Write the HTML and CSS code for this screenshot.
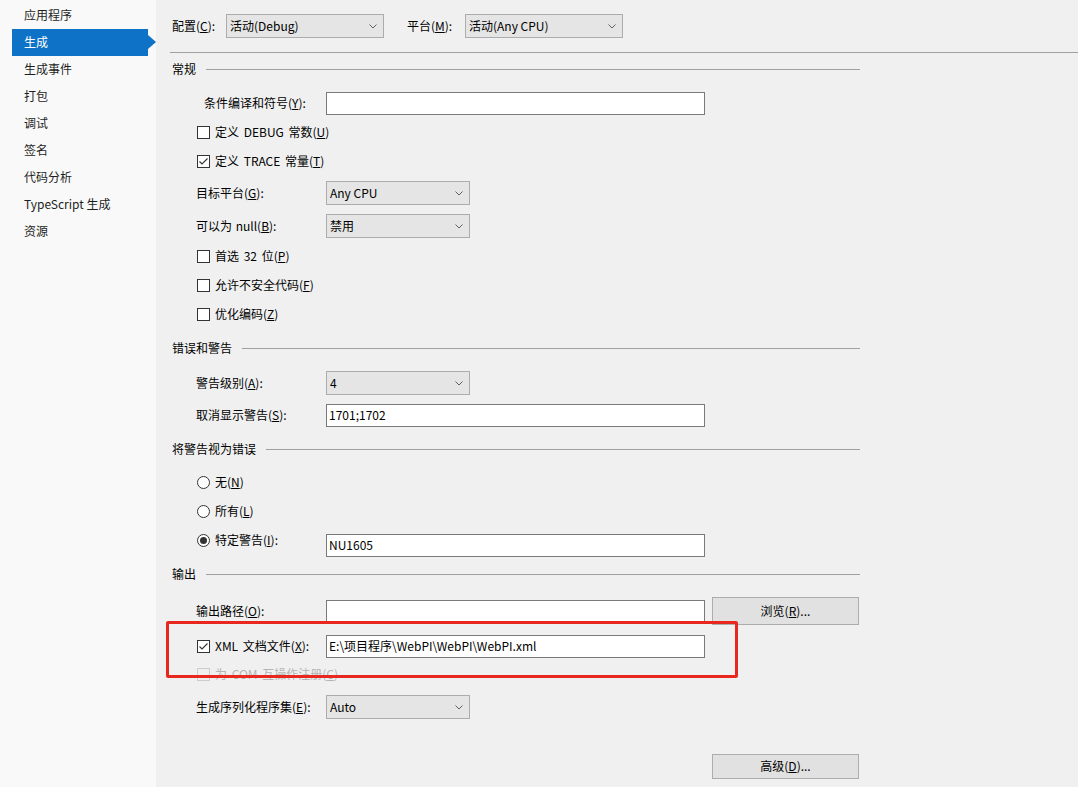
FILE: index.html
```html
<!DOCTYPE html>
<html>

<head>
    <meta charset="UTF-8" />
    <title>生成</title>
    <link rel="stylesheet" href="styles.css">
</head>

<body>
    <div class="sidebar">
        <ul>
            <li>应用程序</li>
            <li class="active">生成</li>
            <li>生成事件</li>
            <li>打包</li>
            <li>调试</li>
            <li>签名</li>
            <li>代码分析</li>
            <li>TypeScript 生成</li>
            <li>资源</li>
        </ul>
    </div>

    <div class="main">
        <!-- 配置 / 平台 -->
        <div class="topbar">
            <span class="top-label">配置(<u>C</u>):</span>
            <div class="combo wide"><span>活动(Debug)</span><svg width="8" height="5" viewBox="0 0 8 5"><polyline points="0.5,0.5 4,4 7.5,0.5" /></svg></div>
            <span class="top-label second">平台(<u>M</u>):</span>
            <div class="combo wide"><span>活动(Any CPU)</span><svg width="8" height="5" viewBox="0 0 8 5"><polyline points="0.5,0.5 4,4 7.5,0.5" /></svg></div>
        </div>
        <div class="separator"></div>

        <!-- 常规 -->
        <div class="section"><span>常规</span></div>
        <div class="field">
            <span class="label indent">条件编译和符号(<u>Y</u>):</span>
            <div class="textbox"></div>
        </div>
        <div class="check">
            <span class="box"></span>
            <span class="text">定义 DEBUG 常数(<u>U</u>)</span>
        </div>
        <div class="check">
            <span class="box"><svg width="11" height="11" viewBox="0 0 11 11"><polyline points="1.5,5.5 4,8 9.5,2.5" /></svg></span>
            <span class="text">定义 TRACE 常量(<u>T</u>)</span>
        </div>
        <div class="field">
            <span class="label">目标平台(<u>G</u>):</span>
            <div class="combo"><span>Any CPU</span><svg width="8" height="5" viewBox="0 0 8 5"><polyline points="0.5,0.5 4,4 7.5,0.5" /></svg></div>
        </div>
        <div class="field">
            <span class="label">可以为 null(<u>B</u>):</span>
            <div class="combo"><span>禁用</span><svg width="8" height="5" viewBox="0 0 8 5"><polyline points="0.5,0.5 4,4 7.5,0.5" /></svg></div>
        </div>
        <div class="check">
            <span class="box"></span>
            <span class="text">首选 32 位(<u>P</u>)</span>
        </div>
        <div class="check">
            <span class="box"></span>
            <span class="text">允许不安全代码(<u>F</u>)</span>
        </div>
        <div class="check">
            <span class="box"></span>
            <span class="text">优化编码(<u>Z</u>)</span>
        </div>

        <!-- 错误和警告 -->
        <div class="section"><span>错误和警告</span></div>
        <div class="field">
            <span class="label">警告级别(<u>A</u>):</span>
            <div class="combo"><span>4</span><svg width="8" height="5" viewBox="0 0 8 5"><polyline points="0.5,0.5 4,4 7.5,0.5" /></svg></div>
        </div>
        <div class="field">
            <span class="label">取消显示警告(<u>S</u>):</span>
            <div class="textbox">1701;1702</div>
        </div>

        <!-- 将警告视为错误 -->
        <div class="section"><span>将警告视为错误</span></div>
        <div class="check">
            <span class="radio"></span>
            <span class="text">无(<u>N</u>)</span>
        </div>
        <div class="check">
            <span class="radio"></span>
            <span class="text">所有(<u>L</u>)</span>
        </div>
        <div class="check tall">
            <div class="check-label">
                <span class="radio on"></span>
                <span class="text">特定警告(<u>I</u>):</span>
            </div>
            <div class="textbox">NU1605</div>
        </div>

        <!-- 输出 -->
        <div class="section"><span>输出</span></div>
        <div class="field path">
            <span class="label">输出路径(<u>O</u>):</span>
            <div class="textbox"></div>
            <div class="button">浏览(<u>R</u>)...</div>
        </div>
        <div class="check tall center">
            <div class="check-label">
                <span class="box"><svg width="11" height="11" viewBox="0 0 11 11"><polyline points="1.5,5.5 4,8 9.5,2.5" /></svg></span>
                <span class="text">XML 文档文件(<u>X</u>):</span>
            </div>
            <div class="textbox">E:\项目程序\WebPI\WebPI\WebPI.xml</div>
        </div>
        <div class="check disabled">
            <span class="box"></span>
            <span class="text">为 COM 互操作注册(<u>C</u>)</span>
        </div>
        <div class="field">
            <span class="label">生成序列化程序集(<u>E</u>):</span>
            <div class="combo"><span>Auto</span><svg width="8" height="5" viewBox="0 0 8 5"><polyline points="0.5,0.5 4,4 7.5,0.5" /></svg></div>
        </div>
        <div class="advanced">
            <div class="button">高级(<u>D</u>)...</div>
        </div>

        <div class="highlight"></div>
    </div>
</body>

</html>
```

FILE: styles.css
```css
* {
    margin: 0;
    padding: 0;
    box-sizing: border-box;
}

body {
    display: flex;
    height: 787px;
    overflow: hidden;
    background: #f0f0f0;
    font-family: "Noto Sans CJK SC", "Noto Sans", sans-serif;
    font-size: 12px;
    color: #000;
}

u {
    text-underline-offset: 1px;
}

/* left menu */
.sidebar {
    width: 156px;
    flex-shrink: 0;
    background: #f9f9f9;
    padding-top: 2px;
}

.sidebar ul {
    list-style: none;
}

.sidebar li {
    position: relative;
    height: 27px;
    line-height: 25px;
    padding-bottom: 2px;
    margin-left: 12px;
    width: 136px;
    padding-left: 12px;
    color: #1e1e1e;
}

.sidebar li.active {
    background: #0e73c6;
    color: #fff;
}

.sidebar li.active::after {
    content: "";
    position: absolute;
    right: -8px;
    top: 6px;
    border-top: 7px solid transparent;
    border-bottom: 7px solid transparent;
    border-left: 8px solid #0e73c6;
}

/* property page */
.main {
    position: relative;
    flex: 1;
    padding: 14px 0 0 16px;
    display: grid;
    grid-template-rows: 38px 9px 30px 31px 29px 30px 33px 32px 29px 29px 36px 31px 32px 38px 31px 29px 33px 32px 31px 37px 30px 31px 59px 25px;
    align-items: start;
}

/* noto glyphs sit a little low, lift the labels */
.top-label,
.field .label,
.check .text,
.section span,
.combo span {
    padding-bottom: 2px;
}

.topbar {
    display: flex;
    align-items: center;
    height: 24px;
}

.top-label {
    width: 54px;
}

.top-label.second {
    width: 58px;
    margin-left: 23px;
}

.separator {
    height: 1px;
    background: #a0a0a0;
    margin-left: -2px;
}

.section {
    display: flex;
    align-items: center;
    width: 688px;
    height: 16px;
    gap: 10px;
}

.section::after {
    content: "";
    flex: 1;
    border-top: 1px solid #a0a0a0;
}

.field {
    display: flex;
    align-items: center;
    height: 24px;
    padding-left: 24px;
}

.field .label {
    width: 130px;
    word-spacing: 1px;
}

.field .label.indent {
    padding-left: 8px;
}

.field.path {
    height: 28px;
}

.combo {
    display: flex;
    align-items: center;
    justify-content: space-between;
    width: 144px;
    height: 24px;
    padding: 0 6px 0 3px;
    background: #e5e5e5;
    border: 1px solid #acacac;
}

.combo.wide {
    width: 158px;
}

.combo svg polyline {
    fill: none;
    stroke: #606060;
    stroke-width: 1;
}

.textbox {
    width: 379px;
    height: 23px;
    line-height: 19px;
    padding-left: 2px;
    background: #fff;
    border: 1px solid #7a7a7a;
    white-space: nowrap;
}

.button {
    width: 147px;
    height: 100%;
    margin-left: 7px;
    padding-bottom: 2px;
    display: flex;
    align-items: center;
    justify-content: center;
    background: #e1e1e1;
    border: 1px solid #adadad;
}

.advanced {
    height: 25px;
    padding-left: 533px;
}

/* checkbox / radio rows */
.check,
.check-label {
    display: flex;
    align-items: center;
    height: 20px;
    gap: 5px;
}

.check {
    padding-left: 25px;
    word-spacing: 2px;
}

.check.tall {
    height: 24px;
    align-items: flex-start;
    gap: 0;
}

.check.tall.center {
    align-items: center;
}

.check.tall .check-label {
    width: 129px;
    height: 13px;
}

.check.tall.center .check-label {
    height: 20px;
}

.box {
    width: 13px;
    height: 13px;
    flex-shrink: 0;
    border: 1px solid #333;
    background: #fff;
    display: flex;
    align-items: center;
    justify-content: center;
}

.box polyline {
    fill: none;
    stroke: #333;
    stroke-width: 1.1;
}

.radio {
    width: 13px;
    height: 13px;
    flex-shrink: 0;
    border: 1px solid #333;
    border-radius: 50%;
    background: #fff;
    display: flex;
    align-items: center;
    justify-content: center;
}

.radio.on::after {
    content: "";
    width: 7px;
    height: 7px;
    border-radius: 50%;
    background: #333;
}

.check.disabled {
    color: #b4b4b4;
}

.check.disabled .box {
    border-color: #cccccc;
    background: transparent;
}

/* red annotation frame */
.highlight {
    position: absolute;
    left: 10px;
    top: 621px;
    width: 572px;
    height: 57px;
    border: 3px solid #e8281f;
    border-radius: 2px;
}
```
